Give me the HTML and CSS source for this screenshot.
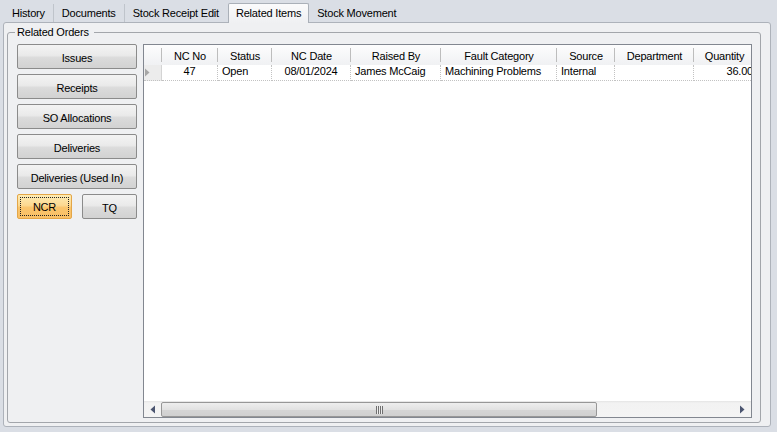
FILE: index.html
```html
<!DOCTYPE html>
<html>
<head>
<meta charset="utf-8">
<title>Related Items</title>
<link rel="stylesheet" href="styles.css">
</head>
<body>
<div class="tabs">
  <div class="tab">History</div>
  <div class="tab">Documents</div>
  <div class="tab pre">Stock Receipt Edit</div>
  <div class="tab active">Related Items</div>
  <div class="tab last">Stock Movement</div>
</div>
<div class="panel">
  <fieldset class="group">
    <legend>Related Orders</legend>
    <div class="content">
      <div class="buttons">
        <button class="btn">Issues</button>
        <button class="btn">Receipts</button>
        <button class="btn">SO Allocations</button>
        <button class="btn">Deliveries</button>
        <button class="btn">Deliveries (Used In)</button>
        <div class="btn-row">
          <button class="btn small ncr"><span class="focus">NCR</span></button>
          <button class="btn small">TQ</button>
        </div>
      </div>
      <div class="grid">
        <div class="cols head">
          <div class="hc"></div>
          <div class="hc">NC No</div>
          <div class="hc">Status</div>
          <div class="hc">NC Date</div>
          <div class="hc">Raised By</div>
          <div class="hc">Fault Category</div>
          <div class="hc">Source</div>
          <div class="hc">Department</div>
          <div class="hc">Quantity</div>
        </div>
        <div class="cols row">
          <div class="dc rh"><svg class="rowmark" width="5" height="9" viewBox="0 0 5 9"><polygon points="0,0.5 0,8.5 4.5,4.5" fill="#a6a6a6"/></svg></div>
          <div class="dc c">47</div>
          <div class="dc">Open</div>
          <div class="dc c">08/01/2024</div>
          <div class="dc">James McCaig</div>
          <div class="dc">Machining Problems</div>
          <div class="dc">Internal</div>
          <div class="dc"></div>
          <div class="dc r">36.00</div>
        </div>
        <div class="fill"></div>
        <div class="hscroll">
          <div class="sb-btn"><svg width="5" height="9" viewBox="0 0 5 9"><polygon points="5,0.5 5,8.5 0.5,4.5" fill="#4b5570"/></svg></div>
          <div class="thumb"><span class="grip"></span></div>
          <div class="track"></div>
          <div class="sb-btn"><svg width="5" height="9" viewBox="0 0 5 9"><polygon points="0,0.5 0,8.5 4.5,4.5" fill="#4b5570"/></svg></div>
        </div>
      </div>
    </div>
  </fieldset>
</div>
</body>
</html>
```

FILE: styles.css
```css
* { box-sizing: border-box; }
html, body { margin: 0; padding: 0; }
body {
  width: 777px;
  height: 432px;
  overflow: hidden;
  background: #dadee5;
  font-family: "Liberation Sans", Arial, sans-serif;
  font-size: 11px;
  letter-spacing: -0.2px;
  color: #000;
}

/* tabs */
.tabs {
  display: flex;
  align-items: flex-end;
  height: 22px;
  padding-left: 4px;
}
.tab {
  height: 18px;
  line-height: 18px;
  padding: 0 8px;
  border-right: 1px solid #bfc4cb;
  white-space: nowrap;
}
.tab.pre { border-right: none; padding-right: 9px; }
.tab.last { border-right: none; }
.tab.active {
  position: relative;
  z-index: 1;
  height: 20px;
  line-height: 19px;
  margin-bottom: -1px;
  padding: 0 7px;
  background: linear-gradient(#fbfbfc, #eff0f2);
  border: 1px solid #aab0b8;
  border-bottom: none;
  border-radius: 2px 2px 0 0;
}

/* tab page */
.panel {
  margin-left: 3px;
  width: 768px;
  height: 405px;
  background: #eff0f2;
  border: 1px solid #adb2ba;
  border-radius: 3px;
  display: flex;
  flex-direction: column;
}
.group {
  flex: 1;
  min-height: 0;
  min-width: 0;
  margin: 3px 9px 3px 3px;
  padding: 5px 8px 4px 9px;
  border: 1px solid #a3a6ab;
  border-radius: 3px;
}
.group legend {
  margin-left: -2px;
  padding: 0 5px 0 2px;
  line-height: 13px;
}
.content {
  display: flex;
  align-items: flex-start;
  gap: 6px;
}

/* buttons */
.buttons {
  width: 120px;
  display: flex;
  flex-direction: column;
  gap: 5px;
}
.btn {
  display: block;
  width: 100%;
  height: 25px;
  margin: 0;
  padding: 3px 0 0;
  line-height: 20px;
  border: 1px solid #8b8b8b;
  border-radius: 2px;
  background: linear-gradient(#f3f3f3, #eaeaea 45%, #dbdbdb 55%, #d2d2d2);
  font: inherit;
  letter-spacing: inherit;
  color: #000;
  text-align: center;
  white-space: nowrap;
}
.btn-row {
  display: flex;
  gap: 10px;
}
.btn.small { width: 55px; }
.btn.ncr {
  padding: 2px;
  border-color: #e3a648;
  background: linear-gradient(#fdebb3, #fcd991 45%, #fac56c 55%, #f9c066);
}
.focus {
  display: block;
  height: 100%;
  padding-top: 1px;
  line-height: 16px;
  border: 1px dotted #222;
}

/* data grid */
.grid {
  width: 609px;
  height: 374px;
  border: 1px solid #828790;
  background: #fff;
  display: flex;
  flex-direction: column;
  overflow: hidden;
}
.cols {
  flex: none;
  width: 611px;
  display: grid;
  grid-template-columns: 18px 56px 54px 79px 90px 116px 58px 79px 61px;
}
.hc {
  height: 20px;
  padding-top: 2px;
  line-height: 18px;
  text-align: center;
  white-space: nowrap;
  overflow: hidden;
  background:
    linear-gradient(#bdbdbd, #bdbdbd) no-repeat right 0 top 3px / 1px 14px,
    linear-gradient(#fdfdfd, #f0f1f3);
}
.dc {
  height: 16px;
  line-height: 13px;
  padding: 0 4px;
  white-space: nowrap;
  overflow: hidden;
  border-right: 1px dotted #c2c2c2;
  border-bottom: 1px dotted #c2c2c2;
}
.dc.c { text-align: center; }
.dc.r { text-align: right; padding-right: 2px; border-right: none; }
.dc.rh {
  padding: 3px 0 0 1px;
  background: #ececec;
  border-right: 1px solid #d4d4d4;
}
.rowmark { display: block; }
.fill { flex: 1; }

/* horizontal scrollbar */
.hscroll {
  flex: none;
  height: 16px;
  display: flex;
  background: linear-gradient(#e4e4e4, #f2f2f2 2px, #f4f4f4);
}
.sb-btn {
  width: 17px;
  display: flex;
  align-items: center;
  justify-content: center;
}
.thumb {
  width: 436px;
  margin-top: 1px;
  border: 1px solid #979797;
  border-radius: 2px;
  background: linear-gradient(#eeeeee, #e2e2e2 50%, #d5d5d5 55%, #d0d0d0);
  display: flex;
  align-items: center;
  justify-content: center;
}
.grip {
  width: 7px;
  height: 8px;
  background: repeating-linear-gradient(to right, #6f6f6f 0 1px, #ececec 1px 2px);
}
.track { flex: 1; }
```
